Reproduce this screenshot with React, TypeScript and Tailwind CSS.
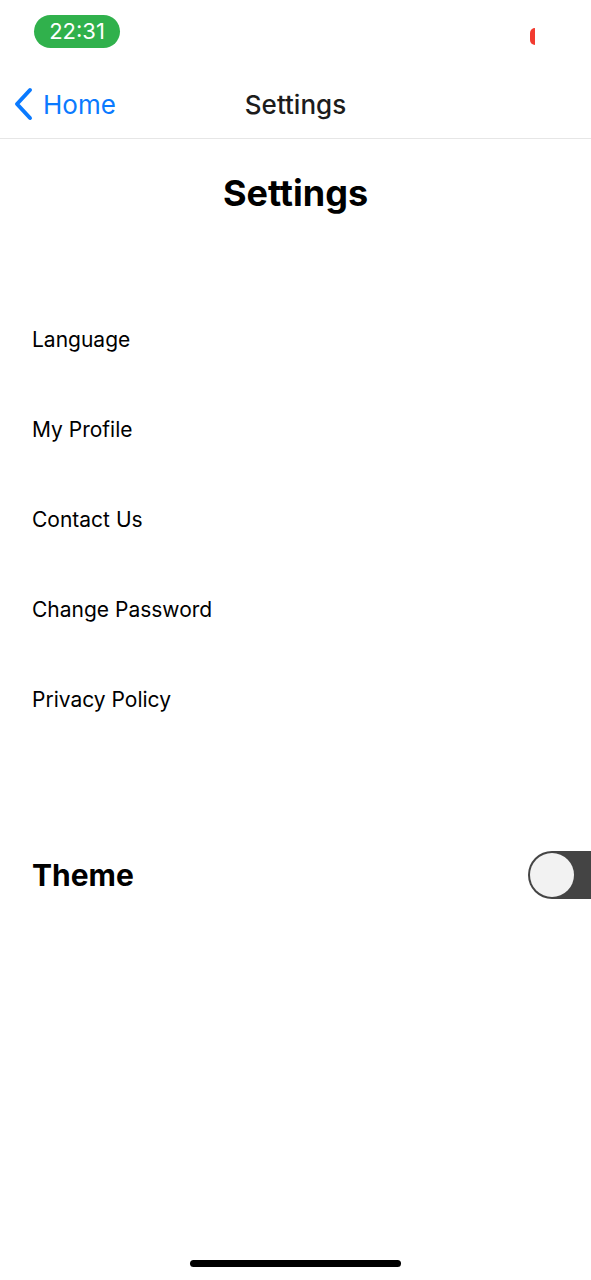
import React from 'react'

const font = { fontFamily: 'Inter, "Noto Sans", sans-serif' }

const items = ['Language', 'My Profile', 'Contact Us', 'Change Password', 'Privacy Policy']

export default function App() {
  return (
    <div className="relative w-[591px] h-[1280px] bg-white overflow-hidden text-black" style={font}>
      {/* status bar */}
      <div className="flex items-center justify-between h-[62px] pl-[34px] pr-[56px]">
        <div className="flex items-center justify-center w-[86px] h-[33px] rounded-full bg-[#30b14c] text-white text-[22px] leading-none">
          22:31
        </div>
        <div className="w-[5px] h-[17px] mt-[10px] rounded-l-full bg-[#f23b30]" />
      </div>

      {/* nav bar */}
      <div className="relative flex items-center h-[77px] pt-[8px] border-b border-[#e6e6e6]">
        <div className="flex items-center gap-[9px] pl-[12px] text-[#0a7aff]">
          <svg width="22" height="34" viewBox="0 0 22 34" fill="none">
            <path d="M18 3 L5 17 L18 31" stroke="#0a7aff" strokeWidth="4" strokeLinecap="round" strokeLinejoin="round" />
          </svg>
          <span className="text-[26px]">Home</span>
        </div>
        <div className="absolute inset-x-0 text-center text-[26px] font-medium text-[#1c1c1c] pointer-events-none">
          Settings
        </div>
      </div>

      <h1 className="mt-[32px] text-center text-[36px] font-bold leading-[44px]">Settings</h1>

      <div className="mt-[80px] flex flex-col pl-[32px]">
        {items.map((t) => (
          <div key={t} className="h-[90px] flex items-center text-[21px]">
            {t}
          </div>
        ))}
      </div>

      <div className="mt-[106px] flex items-center justify-between pl-[32px]">
        <span className="text-[30px] font-bold">Theme</span>
        <div className="flex items-center w-[80px] h-[48px] rounded-l-full bg-[#444444] pl-[2px] -mr-[17px]">
          <div className="w-[44px] h-[44px] rounded-full bg-[#f2f2f2]" />
        </div>
      </div>

      <div className="absolute left-[190px] bottom-[13px] w-[211px] h-[7px] rounded-full bg-black" />
    </div>
  )
}
